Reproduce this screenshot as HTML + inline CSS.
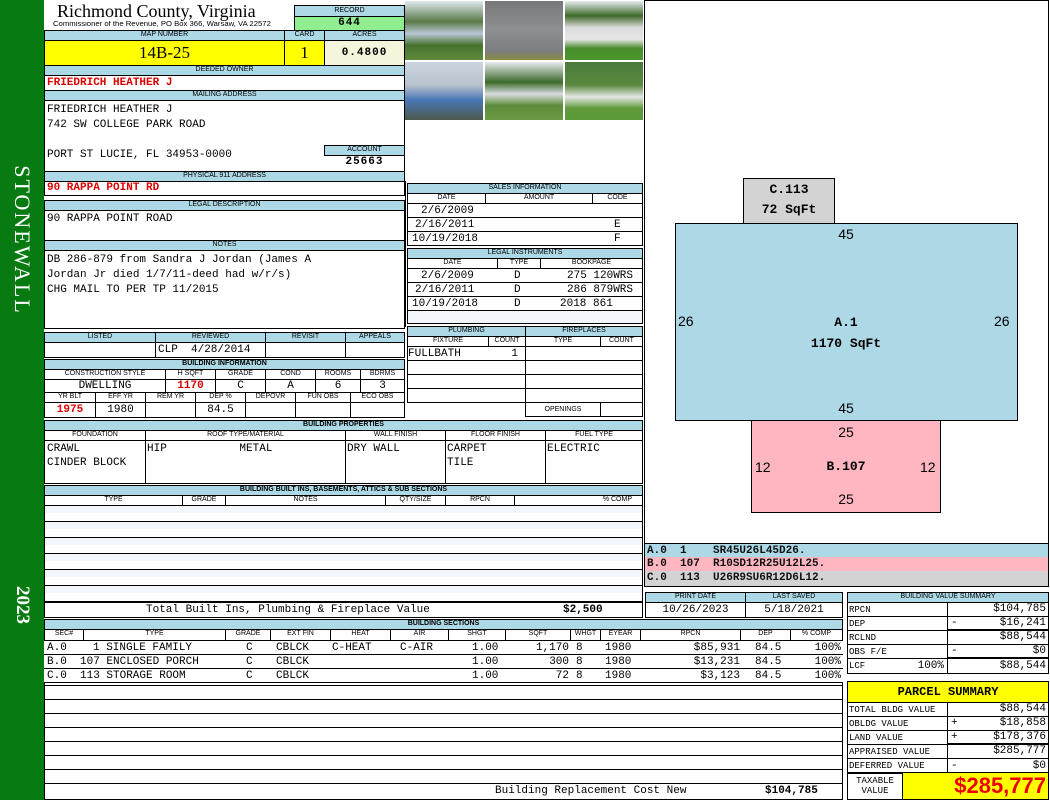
<!DOCTYPE html>
<html><head><meta charset="utf-8"><style>
*{margin:0;padding:0}
body{width:1050px;height:800px;position:relative;background:#fff;overflow:hidden;font-family:"Liberation Sans",sans-serif}
.a{position:absolute;box-sizing:border-box;overflow:hidden;white-space:nowrap}
.b{border:1px solid #000}
.h{background:#add8e6;font:7px/8px "Liberation Sans",sans-serif;text-align:center;color:#000}
.m{font-family:"Liberation Mono",monospace;font-size:11px;line-height:12px;color:#000}
.r{color:#d00;font-weight:bold}
.c{text-align:center}.rt{text-align:right}
</style></head><body>
<div class="a" style="left:0;top:0;width:44px;height:800px;background:#087a12"></div>
<div class="a" style="left:22px;top:240px;transform:translate(-50%,-50%) rotate(90deg);color:#fff;font:22px 'Liberation Serif',serif;letter-spacing:2px;overflow:visible">STONEWALL</div>
<div class="a" style="left:22px;top:605px;transform:translate(-50%,-50%) rotate(90deg);color:#fff;font:bold 19px 'Liberation Serif',serif;overflow:visible">2023</div>

<div class="a" style="left:57px;top:1px;font:18px/20px 'Liberation Serif',serif">Richmond County, Virginia</div>
<div class="a" style="left:53px;top:21px;font:7px/8px 'Liberation Sans',sans-serif;transform-origin:0 0;transform:scaleX(1.1)">Commissioner of the Revenue, PO Box 366, Warsaw, VA 22572</div>
<div class="a b h" style="left:294px;top:5px;width:111px;height:12px;line-height:10px">RECORD</div>
<div class="a b m c" style="left:294px;top:16px;width:111px;height:15px;background:#90ee90;font-weight:bold;letter-spacing:1px">644</div>
<div class="a b h" style="left:44px;top:30px;width:241px;height:11px">MAP NUMBER</div>
<div class="a b h" style="left:284px;top:30px;width:41px;height:11px">CARD</div>
<div class="a b h" style="left:324px;top:30px;width:81px;height:11px">ACRES</div>
<div class="a b c" style="left:44px;top:40px;width:241px;height:26px;background:#ff0;font:17px/24px 'Liberation Serif',serif">14B-25</div>
<div class="a b c" style="left:284px;top:40px;width:41px;height:26px;background:#ff0;font:17px/24px 'Liberation Serif',serif">1</div>
<div class="a b m c" style="left:324px;top:40px;width:81px;height:26px;background:#f5f5dc;line-height:24px;font-weight:bold;letter-spacing:1px">0.4800</div>
<div class="a b h" style="left:44px;top:65px;width:361px;height:11px">DEEDED OWNER</div>
<div class="a b m r" style="left:44px;top:75px;width:361px;height:16px;padding-left:2px;line-height:14px">FRIEDRICH HEATHER J</div>
<div class="a b h" style="left:44px;top:90px;width:361px;height:11px">MAILING ADDRESS</div>
<div class="a b" style="left:44px;top:100px;width:361px;height:72px"></div>
<div class="a m" style="left:47px;top:103px;line-height:15px">FRIEDRICH HEATHER J<br>742 SW COLLEGE PARK ROAD<br><br>PORT ST LUCIE, FL 34953-0000</div>
<div class="a b h" style="left:324px;top:145px;width:81px;height:11px">ACCOUNT</div>
<div class="a m c" style="left:324px;top:156px;width:81px;height:15px;font-weight:bold;letter-spacing:1px">25663</div>
<div class="a b h" style="left:44px;top:171px;width:361px;height:11px">PHYSICAL 911 ADDRESS</div>
<div class="a b m r" style="left:44px;top:181px;width:361px;height:15px;padding-left:2px;line-height:13px">90 RAPPA POINT RD</div>
<div class="a b h" style="left:44px;top:200px;width:361px;height:11px">LEGAL DESCRIPTION</div>
<div class="a b m" style="left:44px;top:210px;width:361px;height:31px;padding:2px 0 0 2px">90 RAPPA POINT ROAD</div>
<div class="a b h" style="left:44px;top:240px;width:361px;height:11px">NOTES</div>
<div class="a b m" style="left:44px;top:250px;width:361px;height:79px;padding:2px 0 0 2px;line-height:15px">DB 286-879 from Sandra J Jordan (James A<br>Jordan Jr died 1/7/11-deed had w/r/s)<br>CHG MAIL TO PER TP 11/2015</div>

<div class="a b h" style="left:44px;top:332px;width:112px;height:11px">LISTED</div>
<div class="a b h" style="left:155px;top:332px;width:111px;height:11px">REVIEWED</div>
<div class="a b h" style="left:265px;top:332px;width:81px;height:11px">REVISIT</div>
<div class="a b h" style="left:345px;top:332px;width:60px;height:11px">APPEALS</div>
<div class="a b" style="left:44px;top:342px;width:112px;height:16px"></div>
<div class="a b m" style="left:155px;top:342px;width:111px;height:16px;padding-left:2px;line-height:14px">CLP&nbsp;&nbsp;4/28/2014</div>
<div class="a b" style="left:265px;top:342px;width:81px;height:16px"></div>
<div class="a b" style="left:345px;top:342px;width:60px;height:16px"></div>

<div class="a b h" style="left:44px;top:359px;width:361px;height:11px;font-weight:bold">BUILDING INFORMATION</div>
<div class="a b h" style="left:44px;top:369px;width:122px;height:11px;background:#fff">CONSTRUCTION STYLE</div>
<div class="a b h" style="left:165px;top:369px;width:51px;height:11px;background:#fff">H SQFT</div>
<div class="a b h" style="left:215px;top:369px;width:51px;height:11px;background:#fff">GRADE</div>
<div class="a b h" style="left:265px;top:369px;width:51px;height:11px;background:#fff">COND</div>
<div class="a b h" style="left:315px;top:369px;width:46px;height:11px;background:#fff">ROOMS</div>
<div class="a b h" style="left:360px;top:369px;width:45px;height:11px;background:#fff">BDRMS</div>
<div class="a b m c" style="left:44px;top:379px;width:122px;height:14px">DWELLING</div>
<div class="a b m c r" style="left:165px;top:379px;width:51px;height:14px">1170</div>
<div class="a b m c" style="left:215px;top:379px;width:51px;height:14px">C</div>
<div class="a b m c" style="left:265px;top:379px;width:51px;height:14px">A</div>
<div class="a b m c" style="left:315px;top:379px;width:46px;height:14px">6</div>
<div class="a b m c" style="left:360px;top:379px;width:45px;height:14px">3</div>
<div class="a b h" style="left:44px;top:392px;width:52px;height:11px;background:#fff">YR BLT</div>
<div class="a b h" style="left:95px;top:392px;width:51px;height:11px;background:#fff">EFF YR</div>
<div class="a b h" style="left:145px;top:392px;width:51px;height:11px;background:#fff">REM YR</div>
<div class="a b h" style="left:195px;top:392px;width:51px;height:11px;background:#fff">DEP %</div>
<div class="a b h" style="left:245px;top:392px;width:51px;height:11px;background:#fff">DEPOVR</div>
<div class="a b h" style="left:295px;top:392px;width:56px;height:11px;background:#fff">FUN OBS</div>
<div class="a b h" style="left:350px;top:392px;width:55px;height:11px;background:#fff">ECO OBS</div>
<div class="a b m c r" style="left:44px;top:402px;width:52px;height:16px;line-height:14px">1975</div>
<div class="a b m c" style="left:95px;top:402px;width:51px;height:16px;line-height:14px">1980</div>
<div class="a b" style="left:145px;top:402px;width:51px;height:16px"></div>
<div class="a b m c" style="left:195px;top:402px;width:51px;height:16px;line-height:14px">84.5</div>
<div class="a b" style="left:245px;top:402px;width:51px;height:16px"></div>
<div class="a b" style="left:295px;top:402px;width:56px;height:16px"></div>
<div class="a b" style="left:350px;top:402px;width:55px;height:16px"></div>

<div class="a b h" style="left:44px;top:420px;width:599px;height:11px;font-weight:bold">BUILDING PROPERTIES</div>
<div class="a b h" style="left:44px;top:430px;width:102px;height:11px;background:#fff">FOUNDATION</div>
<div class="a b h" style="left:145px;top:430px;width:201px;height:11px;background:#fff">ROOF TYPE/MATERIAL</div>
<div class="a b h" style="left:345px;top:430px;width:101px;height:11px;background:#fff">WALL FINISH</div>
<div class="a b h" style="left:445px;top:430px;width:101px;height:11px;background:#fff">FLOOR FINISH</div>
<div class="a b h" style="left:545px;top:430px;width:98px;height:11px;background:#fff">FUEL TYPE</div>
<div class="a b m" style="left:44px;top:440px;width:102px;height:44px;padding:1px 0 0 2px;line-height:14px">CRAWL<br>CINDER BLOCK</div>
<div class="a b m" style="left:145px;top:440px;width:201px;height:44px;padding:1px 0 0 1px;line-height:14px">HIP&nbsp;&nbsp;&nbsp;&nbsp;&nbsp;&nbsp;&nbsp;&nbsp;&nbsp;&nbsp;&nbsp;METAL</div>
<div class="a b m" style="left:345px;top:440px;width:101px;height:44px;padding:1px 0 0 1px;line-height:14px">DRY WALL</div>
<div class="a b m" style="left:445px;top:440px;width:101px;height:44px;padding:1px 0 0 1px;line-height:14px">CARPET<br>TILE</div>
<div class="a b m" style="left:545px;top:440px;width:98px;height:44px;padding:1px 0 0 1px;line-height:14px">ELECTRIC</div>

<div class="a b h" style="left:44px;top:485px;width:599px;height:11px;font-weight:bold">BUILDING BUILT INS, BASEMENTS, ATTICS &amp; SUB SECTIONS</div>
<div class="a b h" style="left:44px;top:495px;width:139px;height:11px;background:#fff">TYPE</div>
<div class="a b h" style="left:182px;top:495px;width:44px;height:11px;background:#fff">GRADE</div>
<div class="a b h" style="left:225px;top:495px;width:161px;height:11px;background:#fff">NOTES</div>
<div class="a b h" style="left:385px;top:495px;width:61px;height:11px;background:#fff">QTY/SIZE</div>
<div class="a b h" style="left:445px;top:495px;width:70px;height:11px;background:#fff">RPCN</div>
<div class="a b h" style="left:514px;top:495px;width:129px;height:11px;background:#fff;text-align:right;padding-right:10px">% COMP</div>
<div class="a b" style="left:44px;top:505px;width:599px;height:113px;background:repeating-linear-gradient(#f3f6fa 0,#f3f6fa 7px,#fff 7px,#fff 15px,#000 15px,#000 16px)"></div>
<div class="a b m" style="left:44px;top:602px;width:599px;height:16px;background:#fff;line-height:15px"><span style="position:absolute;left:101px">Total Built Ins, Plumbing &amp; Fireplace Value</span><span style="position:absolute;left:518px;font-weight:bold">$2,500</span></div>

<div class="a b h" style="left:44px;top:619px;width:799px;height:11px;font-weight:bold">BUILDING SECTIONS</div>
<div class="a" style="left:44px;top:629px;width:799px;height:171px;border:1px solid #000;background:repeating-linear-gradient(#fff 0,#fff 13px,#000 13px,#000 14px)"></div>
<div class="a b h" style="left:44px;top:629px;width:40px;height:12px;background:#fff">SEC#</div>
<div class="a b h" style="left:83px;top:629px;width:143px;height:12px;background:#fff">TYPE</div>
<div class="a b h" style="left:225px;top:629px;width:46px;height:12px;background:#fff">GRADE</div>
<div class="a b h" style="left:270px;top:629px;width:61px;height:12px;background:#fff">EXT FIN</div>
<div class="a b h" style="left:330px;top:629px;width:61px;height:12px;background:#fff">HEAT</div>
<div class="a b h" style="left:390px;top:629px;width:59px;height:12px;background:#fff">AIR</div>
<div class="a b h" style="left:448px;top:629px;width:58px;height:12px;background:#fff">SHGT</div>
<div class="a b h" style="left:505px;top:629px;width:66px;height:12px;background:#fff">SQFT</div>
<div class="a b h" style="left:570px;top:629px;width:31px;height:12px;background:#fff">WHGT</div>
<div class="a b h" style="left:600px;top:629px;width:41px;height:12px;background:#fff">EYEAR</div>
<div class="a b h" style="left:640px;top:629px;width:101px;height:12px;background:#fff">RPCN</div>
<div class="a b h" style="left:740px;top:629px;width:51px;height:12px;background:#fff">DEP</div>
<div class="a b h" style="left:790px;top:629px;width:53px;height:12px;background:#fff">% COMP</div>
<div class="a m" style="left:44px;top:641px;width:799px;height:42px;background:#fff;line-height:14px;font-size:11px">
<div style="position:relative;height:14px;border-bottom:1px solid #000;box-sizing:border-box"><span style="position:absolute;left:3px">A.0</span><span style="position:absolute;left:49px">1 SINGLE FAMILY</span><span style="position:absolute;left:202px">C</span><span style="position:absolute;left:232px">CBLCK</span><span style="position:absolute;left:288px">C-HEAT</span><span style="position:absolute;left:356px">C-AIR</span><span style="position:absolute;left:428px">1.00</span><span style="position:absolute;right:274px">1,170</span><span style="position:absolute;left:532px">8</span><span style="position:absolute;left:561px">1980</span><span style="position:absolute;right:103px">$85,931</span><span style="position:absolute;left:711px">84.5</span><span style="position:absolute;right:2px">100%</span></div>
<div style="position:relative;height:14px;border-bottom:1px solid #000;box-sizing:border-box"><span style="position:absolute;left:3px">B.0</span><span style="position:absolute;left:36px">107 ENCLOSED PORCH</span><span style="position:absolute;left:202px">C</span><span style="position:absolute;left:232px">CBLCK</span><span style="position:absolute;left:428px">1.00</span><span style="position:absolute;right:274px">300</span><span style="position:absolute;left:532px">8</span><span style="position:absolute;left:561px">1980</span><span style="position:absolute;right:103px">$13,231</span><span style="position:absolute;left:711px">84.5</span><span style="position:absolute;right:2px">100%</span></div>
<div style="position:relative;height:14px;border-bottom:1px solid #000;box-sizing:border-box"><span style="position:absolute;left:3px">C.0</span><span style="position:absolute;left:36px">113 STORAGE ROOM</span><span style="position:absolute;left:202px">C</span><span style="position:absolute;left:232px">CBLCK</span><span style="position:absolute;left:428px">1.00</span><span style="position:absolute;right:274px">72</span><span style="position:absolute;left:532px">8</span><span style="position:absolute;left:561px">1980</span><span style="position:absolute;right:103px">$3,123</span><span style="position:absolute;left:711px">84.5</span><span style="position:absolute;right:2px">100%</span></div>
</div>
<div class="a m" style="left:45px;top:785px;width:797px;height:14px;background:#fff"><span style="position:absolute;left:450px">Building Replacement Cost New</span><span style="position:absolute;left:720px;font-weight:bold">$104,785</span></div>

<div class="a" style="left:405px;top:0;width:240px;height:182px;border-right:1px solid #000"></div>
<div class="a" style="left:405px;top:1px;width:78px;height:59px;background:linear-gradient(#dfe8ee 0,#5a7a48 35%,#b9c7d6 55%,#46722e 75%,#5f8a3a)"></div>
<div class="a" style="left:485px;top:1px;width:78px;height:59px;background:linear-gradient(#77787a,#8d8f92 50%,#7b7d7f 85%,#8a8a40)"></div>
<div class="a" style="left:565px;top:1px;width:78px;height:59px;background:linear-gradient(#e8eef0 0,#3f6a2a 25%,#dcdcdc 45%,#e6e6e6 65%,#4a8c2c 80%,#4c9a2e)"></div>
<div class="a" style="left:405px;top:62px;width:78px;height:58px;background:linear-gradient(#cbd5df,#b8c2cc 40%,#4a78b8 65%,#4b5a4a)"></div>
<div class="a" style="left:485px;top:62px;width:78px;height:58px;background:linear-gradient(#e6eaee,#3e6a2a 35%,#d8dde0 55%,#5c8c3a 75%,#6a9a42)"></div>
<div class="a" style="left:565px;top:62px;width:78px;height:58px;background:linear-gradient(#4a7a3a,#5a8a40 40%,#e6e6e6 60%,#5f9a3a 80%,#5a9a38)"></div>

<div class="a b" style="left:405px;top:181px;width:240px;height:146px;border-width:0 1px"></div>
<div class="a b h" style="left:407px;top:183px;width:236px;height:11px">SALES INFORMATION</div>
<div class="a b h" style="left:407px;top:193px;width:79px;height:11px;background:#fff">DATE</div>
<div class="a b h" style="left:485px;top:193px;width:108px;height:11px;background:#fff">AMOUNT</div>
<div class="a b h" style="left:592px;top:193px;width:51px;height:11px;background:#fff">CODE</div>
<div class="a b m" style="left:407px;top:203px;width:236px;height:43px;background:repeating-linear-gradient(#fff 0,#fff 13px,#000 13px,#000 14px);line-height:14px">
<div style="position:relative;height:14px"><span style="position:absolute;left:13px">2/6/2009</span></div>
<div style="position:relative;height:14px"><span style="position:absolute;left:7px">2/16/2011</span><span style="position:absolute;left:206px">E</span></div>
<div style="position:relative;height:14px"><span style="position:absolute;left:4px">10/19/2018</span><span style="position:absolute;left:206px">F</span></div></div>
<div class="a b h" style="left:407px;top:248px;width:236px;height:11px">LEGAL INSTRUMENTS</div>
<div class="a b h" style="left:407px;top:258px;width:91px;height:11px;background:#fff">DATE</div>
<div class="a b h" style="left:497px;top:258px;width:44px;height:11px;background:#fff">TYPE</div>
<div class="a b h" style="left:540px;top:258px;width:103px;height:11px;background:#fff">BOOKPAGE</div>
<div class="a b m" style="left:407px;top:268px;width:236px;height:56px;background:linear-gradient(#fff 0,#fff 42px,#f3f6fa 42px);line-height:14px">
<div style="position:relative;height:14px;border-bottom:1px solid #000;box-sizing:border-box"><span style="position:absolute;left:13px">2/6/2009</span><span style="position:absolute;left:106px">D</span><span style="position:absolute;left:159px">275 120WRS</span></div>
<div style="position:relative;height:14px;border-bottom:1px solid #000;box-sizing:border-box"><span style="position:absolute;left:7px">2/16/2011</span><span style="position:absolute;left:106px">D</span><span style="position:absolute;left:159px">286 879WRS</span></div>
<div style="position:relative;height:14px;border-bottom:1px solid #000;box-sizing:border-box"><span style="position:absolute;left:4px">10/19/2018</span><span style="position:absolute;left:106px">D</span><span style="position:absolute;left:152px">2018 861</span></div></div>

<div class="a b h" style="left:407px;top:326px;width:119px;height:11px">PLUMBING</div>
<div class="a b h" style="left:525px;top:326px;width:118px;height:11px">FIREPLACES</div>
<div class="a b h" style="left:407px;top:336px;width:82px;height:11px;background:#fff">FIXTURE</div>
<div class="a b h" style="left:488px;top:336px;width:38px;height:11px;background:#fff">COUNT</div>
<div class="a b h" style="left:525px;top:336px;width:76px;height:11px;background:#fff">TYPE</div>
<div class="a b h" style="left:600px;top:336px;width:43px;height:11px;background:#fff">COUNT</div>
<div class="a" style="left:407px;top:346px;width:119px;height:57px;border:1px solid #000;background:repeating-linear-gradient(#fff 0,#fff 13px,#000 13px,#000 14px)"></div>
<div class="a" style="left:525px;top:346px;width:118px;height:57px;border:1px solid #000;background:repeating-linear-gradient(#fff 0,#fff 13px,#000 13px,#000 14px)"></div>
<div class="a m" style="left:408px;top:347px;width:116px;height:13px;background:#fff;line-height:14px">FULLBATH<span style="position:absolute;right:6px">1</span></div>
<div class="a b h" style="left:525px;top:402px;width:76px;height:15px;background:#fff;line-height:13px">OPENINGS</div>
<div class="a b" style="left:600px;top:402px;width:43px;height:15px"></div>

<div class="a b" style="left:644px;top:0;width:405px;height:544px"></div>
<div class="a" style="left:743px;top:178px;width:92px;height:46px;background:#d3d3d3;border:1px solid #000;text-align:center;font:bold 13px/20px 'Liberation Mono',monospace;padding-top:1px">C.113<br>72 SqFt</div>
<div class="a" style="left:675px;top:223px;width:343px;height:198px;background:#add8e6;border:1.5px solid #000"></div>
<div class="a" style="left:751px;top:420px;width:190px;height:93px;background:#ffb6c1;border:1px solid #000"></div>
<div class="a" style="left:846px;top:226px;transform:translateX(-50%);font:14px 'Liberation Sans',sans-serif">45</div>
<div class="a" style="left:846px;top:400px;transform:translateX(-50%);font:14px 'Liberation Sans',sans-serif">45</div>
<div class="a" style="left:678px;top:313px;font:14px 'Liberation Sans',sans-serif">26</div>
<div class="a" style="left:994px;top:313px;font:14px 'Liberation Sans',sans-serif">26</div>
<div class="a" style="left:846px;top:312px;transform:translateX(-50%);text-align:center;font:bold 13px/21px 'Liberation Mono',monospace">A.1<br>1170 SqFt</div>
<div class="a" style="left:846px;top:424px;transform:translateX(-50%);font:14px 'Liberation Sans',sans-serif">25</div>
<div class="a" style="left:846px;top:491px;transform:translateX(-50%);font:14px 'Liberation Sans',sans-serif">25</div>
<div class="a" style="left:755px;top:459px;font:14px 'Liberation Sans',sans-serif">12</div>
<div class="a" style="left:920px;top:459px;font:14px 'Liberation Sans',sans-serif">12</div>
<div class="a" style="left:846px;top:459px;transform:translateX(-50%);font:bold 13px 'Liberation Mono',monospace">B.107</div>
<div class="a m" style="left:644px;top:543px;width:405px;height:15px;background:#add8e6;border:1px solid #000;border-bottom:0;font-weight:bold;color:#111;line-height:14px;padding-left:2px">A.0&nbsp;&nbsp;1&nbsp;&nbsp;&nbsp;&nbsp;SR45U26L45D26.</div>
<div class="a m" style="left:644px;top:557px;width:405px;height:15px;background:#ffb6c1;border:1px solid #000;border-width:0 1px;font-weight:bold;color:#111;line-height:14px;padding-left:2px">B.0&nbsp;&nbsp;107&nbsp;&nbsp;R10SD12R25U12L25.</div>
<div class="a m" style="left:644px;top:571px;width:405px;height:16px;background:#d3d3d3;border:1px solid #000;border-top:0;font-weight:bold;color:#111;line-height:14px;padding-left:2px">C.0&nbsp;&nbsp;113&nbsp;&nbsp;U26R9SU6R12D6L12.</div>

<div class="a b h" style="left:645px;top:592px;width:101px;height:11px">PRINT DATE</div>
<div class="a b h" style="left:745px;top:592px;width:98px;height:11px">LAST SAVED</div>
<div class="a b m c" style="left:645px;top:602px;width:101px;height:16px;line-height:14px">10/26/2023</div>
<div class="a b m c" style="left:745px;top:602px;width:98px;height:16px;line-height:14px">5/18/2021</div>

<div class="a b h" style="left:847px;top:592px;width:202px;height:11px">BUILDING VALUE SUMMARY</div>
<div class="a m" style="left:847px;top:602px;width:202px;height:72px;font-size:9px;line-height:14px">
<div class="a b" style="left:0;top:0;width:101px;height:15px;padding-left:1px">RPCN</div><div class="a b rt" style="left:100px;top:0;width:102px;height:15px;font-size:11px;padding-right:2px;line-height:13px">$104,785</div>
<div class="a b" style="left:0;top:14px;width:101px;height:15px;padding-left:1px">DEP</div><div class="a b rt" style="left:100px;top:14px;width:102px;height:15px;font-size:11px;padding-right:2px;line-height:13px;border-bottom-width:2px"><span style="float:left;padding-left:3px">-</span>$16,241</div>
<div class="a b" style="left:0;top:28px;width:101px;height:15px;padding-left:1px">RCLND</div><div class="a b rt" style="left:100px;top:28px;width:102px;height:15px;font-size:11px;padding-right:2px;line-height:13px">$88,544</div>
<div class="a b" style="left:0;top:42px;width:101px;height:15px;padding-left:1px">OBS F/E</div><div class="a b rt" style="left:100px;top:42px;width:102px;height:15px;font-size:11px;padding-right:2px;line-height:13px;border-bottom-width:2px"><span style="float:left;padding-left:3px">-</span>$0</div>
<div class="a b" style="left:0;top:56px;width:101px;height:16px;padding-left:1px">LCF<span style="position:absolute;right:3px;font-size:11px">100%</span></div><div class="a b rt" style="left:100px;top:56px;width:102px;height:16px;font-size:11px;padding-right:2px;line-height:14px">$88,544</div>
</div>

<div class="a b" style="left:847px;top:681px;width:202px;height:22px;background:#ff0;text-align:center;font:bold 12px/20px 'Liberation Mono',monospace">PARCEL SUMMARY</div>
<div class="a m" style="left:847px;top:702px;width:202px;height:72px;font-size:9px;line-height:14px">
<div class="a b" style="left:0;top:0;width:101px;height:15px;padding-left:1px">TOTAL BLDG VALUE</div><div class="a b rt" style="left:100px;top:0;width:102px;height:15px;font-size:11px;padding-right:2px;line-height:13px">$88,544</div>
<div class="a b" style="left:0;top:14px;width:101px;height:15px;padding-left:1px">OBLDG VALUE</div><div class="a b rt" style="left:100px;top:14px;width:102px;height:15px;font-size:11px;padding-right:2px;line-height:13px"><span style="float:left;padding-left:3px">+</span>$18,858</div>
<div class="a b" style="left:0;top:28px;width:101px;height:15px;padding-left:1px">LAND VALUE</div><div class="a b rt" style="left:100px;top:28px;width:102px;height:15px;font-size:11px;padding-right:2px;line-height:13px;border-bottom-width:2px"><span style="float:left;padding-left:3px">+</span>$178,376</div>
<div class="a b" style="left:0;top:42px;width:101px;height:15px;padding-left:1px">APPRAISED VALUE</div><div class="a b rt" style="left:100px;top:42px;width:102px;height:15px;font-size:11px;padding-right:2px;line-height:13px">$285,777</div>
<div class="a b" style="left:0;top:56px;width:101px;height:16px;padding-left:1px">DEFERRED VALUE</div><div class="a b rt" style="left:100px;top:56px;width:102px;height:16px;font-size:11px;padding-right:2px;line-height:14px;border-bottom-width:2px"><span style="float:left;padding-left:3px">-</span>$0</div>
</div>
<div class="a b c" style="left:847px;top:772px;width:56px;height:28px;font:9px/10px 'Liberation Mono',monospace;padding-top:3px">TAXABLE<br>VALUE</div>
<div class="a b rt" style="left:902px;top:772px;width:147px;height:28px;background:#ff0;color:#e00;font:bold 22px/26px 'Liberation Sans',sans-serif;padding-right:2px">$285,777</div>
</body></html>
